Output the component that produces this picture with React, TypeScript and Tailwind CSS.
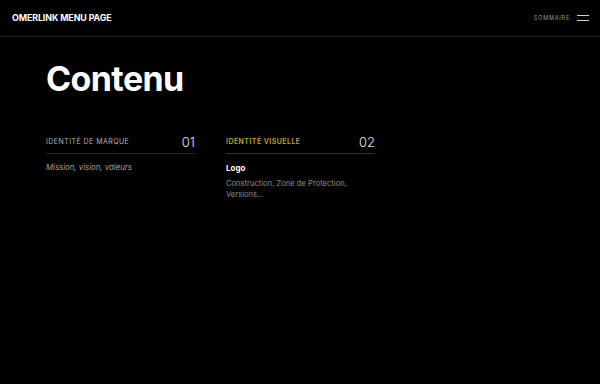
const sections = [
  { label: "Identité de marque", num: "01", active: false, items: [{ title: "", text: "Mission, vision, valeurs" }] },
  { label: "Identité visuelle", num: "02", active: true, items: [{ title: "Logo", text: "Construction, Zone de Protection, Versions..." }] },
];

export default function App() {
  return (
    <div className="w-[600px] h-[384px] bg-black text-white overflow-hidden" style={{ fontFamily: "Inter, 'Liberation Sans', sans-serif" }}>
      <header className="h-[37px] flex items-center justify-between pl-[12px] pr-[11px] border-b border-[#1f1f1f]">
        <span className="text-[8.9px] font-bold tracking-[-0.1px]">OMERLINK MENU PAGE</span>
        <div className="flex items-center gap-[7px]">
          <span className="text-[5.5px] tracking-[0.8px] text-[#9a9a9a] uppercase">Sommaire</span>
          <div className="flex flex-col gap-[4px] w-[12px]">
            <span className="block h-[1px] bg-[#d0d0d0]" />
            <span className="block h-[1px] bg-[#d0d0d0]" />
          </div>
        </div>
      </header>

      <main className="px-[46px]">
        <h1 className="mt-[22px] text-[34px] leading-[40px] font-bold tracking-[-0.6px]">Contenu</h1>

        <div className="mt-[35px] flex gap-[31px]">
          {sections.map((s) => (
            <div key={s.num} className="w-[149px]">
              <div className={`flex items-center justify-between pb-[3px] border-b ${s.active ? "border-[#3d3420]" : "border-[#262626]"}`}>
                <span className={`text-[7px] uppercase tracking-[0.45px] ${s.active ? "text-[#c9a23c] font-semibold" : "text-[#b5b5b5]"}`}>{s.label}</span>
                <span className="text-[13px] font-light leading-[16px] text-[#e5e5e5]">{s.num}</span>
              </div>
              {s.items.map((it, i) =>
                it.title ? (
                  <div key={i} className="mt-[8px]">
                    <div className="text-[8px] font-bold text-white">{it.title}</div>
                    <p className="mt-[4px] text-[7.6px] leading-[11px] text-[#8e8e8e] pr-[20px]">{it.text}</p>
                  </div>
                ) : (
                  <p key={i} className="mt-[8px] text-[7.8px] italic text-[#a0a0a0]">{it.text}</p>
                )
              )}
            </div>
          ))}
        </div>
      </main>
    </div>
  );
}
